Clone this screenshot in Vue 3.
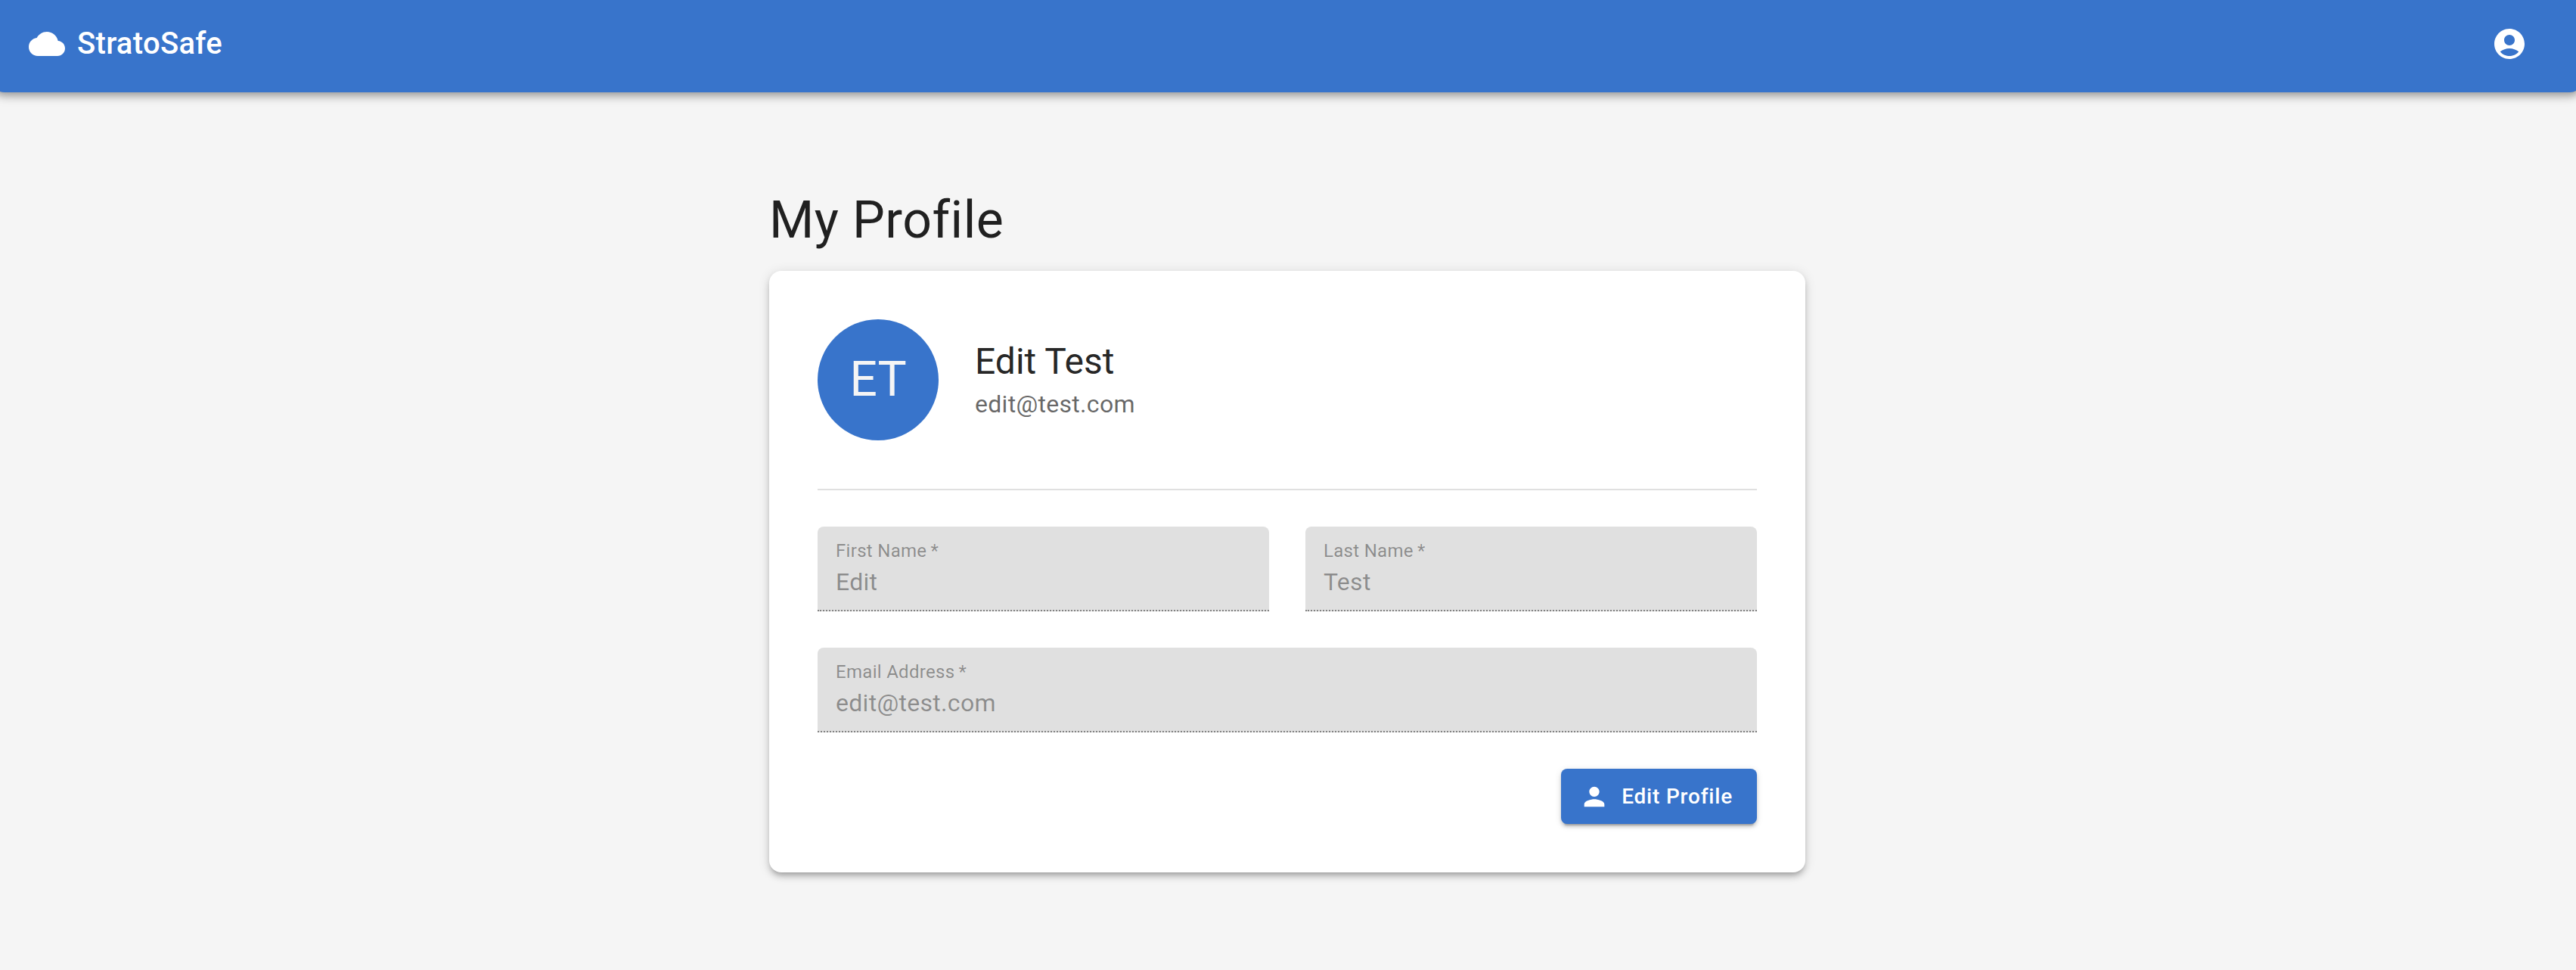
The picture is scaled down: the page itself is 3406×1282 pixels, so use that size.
<script setup>
const user = { firstName: 'Edit', lastName: 'Test', email: 'edit@test.com' }
const initials = user.firstName[0] + user.lastName[0]
const fields = [
  { label: 'First Name', value: user.firstName },
  { label: 'Last Name', value: user.lastName },
  { label: 'Email Address', value: user.email, wide: true },
]
</script>

<template>
  <div class="page">
    <header class="app-bar">
      <svg class="icon" viewBox="0 0 24 24"><path d="M19.35 10.04C18.67 6.59 15.64 4 12 4 9.11 4 6.6 5.64 5.35 8.04 2.34 8.36 0 10.91 0 14c0 3.31 2.69 6 6 6h13c2.76 0 5-2.24 5-5 0-2.64-2.05-4.78-4.65-4.96z" /></svg>
      <span class="brand">StratoSafe</span>
      <button class="account" aria-label="Account">
        <svg class="icon" viewBox="0 0 24 24"><path d="M12 2C6.48 2 2 6.48 2 12s4.48 10 10 10 10-4.48 10-10S17.52 2 12 2zm0 4c1.93 0 3.5 1.57 3.5 3.5S13.93 13 12 13s-3.5-1.57-3.5-3.5S10.07 6 12 6zm0 14c-2.03 0-4.43-.82-6.14-2.88C7.55 15.8 9.68 15 12 15s4.45.8 6.14 2.12C16.43 19.18 14.03 20 12 20z" /></svg>
      </button>
    </header>

    <main class="content">
      <h1 class="title">My Profile</h1>
      <section class="card">
        <div class="identity">
          <div class="avatar">{{ initials }}</div>
          <div>
            <div class="name">{{ user.firstName }} {{ user.lastName }}</div>
            <div class="email">{{ user.email }}</div>
          </div>
        </div>
        <hr class="divider" />
        <div class="fields">
          <div v-for="f in fields" :key="f.label" class="field" :class="{ wide: f.wide }">
            <div class="label">{{ f.label }}&#8201;*</div>
            <div class="value">{{ f.value }}</div>
          </div>
        </div>
        <div class="actions">
          <button class="edit">
            <svg class="edit-icon" viewBox="0 0 24 24"><path d="M12 12c2.21 0 4-1.79 4-4s-1.79-4-4-4-4 1.79-4 4 1.79 4 4 4zm0 2c-2.67 0-8 1.34-8 4v2h16v-2c0-2.66-5.33-4-8-4z" /></svg>
            <span>Edit Profile</span>
          </button>
        </div>
      </section>
    </main>
  </div>
</template>

<style>
body {
  margin: 0;
  background: #f5f5f5;
}
</style>

<style scoped>
.page {
  height: 1282px;
  overflow: hidden;
  display: flow-root;
  background: #f5f5f5;
  color: rgba(0, 0, 0, 0.87);
  font-family: Roboto, "Liberation Sans", sans-serif;
  font-size: 32px;
  -webkit-font-smoothing: antialiased;
}
.page * {
  box-sizing: border-box;
}
button {
  border: 0;
  font-family: inherit;
  color: #fff;
}
svg {
  fill: currentColor;
  flex: none;
  display: block;
}
.app-bar {
  height: 128px;
  margin: -6px -8px 0 -10px;
  padding: 0 48px;
  display: flex;
  align-items: center;
  color: #fff;
  background: #3874cb;
  border-radius: 16px;
  box-shadow: 0 4px 8px -2px rgba(0, 0, 0, 0.2), 0 8px 10px 0 rgba(0, 0, 0, 0.14), 0 2px 20px 0 rgba(0, 0, 0, 0.12);
}
.icon {
  width: 48px;
  height: 48px;
}
.brand {
  margin-left: 16px;
  font-size: 40px;
  line-height: 64px;
  font-weight: 500;
  letter-spacing: 0.0075em;
}
.account {
  margin-left: auto;
  padding: 24px;
  background: none;
}
.content {
  width: 1370px;
  margin: 127px 0 0 1017px;
}
.title {
  margin: 0 0 25px;
  font-size: 68px;
  line-height: 84px;
  font-weight: 400;
  letter-spacing: 0.00735em;
}
.card {
  padding: 64px;
  background: #fff;
  border-radius: 16px;
  box-shadow: 0 6px 6px -4px rgba(0, 0, 0, 0.2), 0 6px 8px 0 rgba(0, 0, 0, 0.14), 0 2px 16px 0 rgba(0, 0, 0, 0.12);
}
.identity {
  display: flex;
  align-items: center;
  gap: 48px;
}
.avatar {
  width: 160px;
  height: 160px;
  border-radius: 50%;
  display: flex;
  align-items: center;
  justify-content: center;
  background: #3874cb;
  color: #f5f5f5;
  font-size: 64px;
  line-height: 1;
}
.name {
  font-size: 48px;
  line-height: 64px;
}
.email {
  line-height: 48px;
  letter-spacing: 0.00938em;
  color: rgba(0, 0, 0, 0.6);
}
.divider {
  margin: 64px 0 48px;
  border: 0;
  height: 2px;
  background: #e0e0e0;
}
.fields {
  display: grid;
  grid-template-columns: 1fr 1fr;
  gap: 48px;
}
.field {
  height: 112px;
  padding: 15px 24px 0;
  background: #e0e0e0;
  border-radius: 8px 8px 0 0;
  border-bottom: 2px dotted #838383;
  color: rgba(0, 0, 0, 0.38);
  letter-spacing: 0.00938em;
}
.wide {
  grid-column: span 2;
}
.label {
  font-size: 24px;
  line-height: 35px;
}
.value {
  line-height: 46px;
}
.actions {
  margin-top: 48px;
  display: flex;
  justify-content: flex-end;
}
.edit {
  height: 73px;
  padding: 0 32px 0 24px;
  display: flex;
  align-items: center;
  gap: 16px;
  background: #3874cb;
  border-radius: 8px;
  font-size: 28px;
  line-height: 49px;
  font-weight: 500;
  letter-spacing: 0.02857em;
  box-shadow: 0 6px 2px -4px rgba(0, 0, 0, 0.2), 0 4px 4px 0 rgba(0, 0, 0, 0.14), 0 2px 10px 0 rgba(0, 0, 0, 0.12);
}
.edit-icon {
  width: 40px;
  height: 40px;
}
</style>
